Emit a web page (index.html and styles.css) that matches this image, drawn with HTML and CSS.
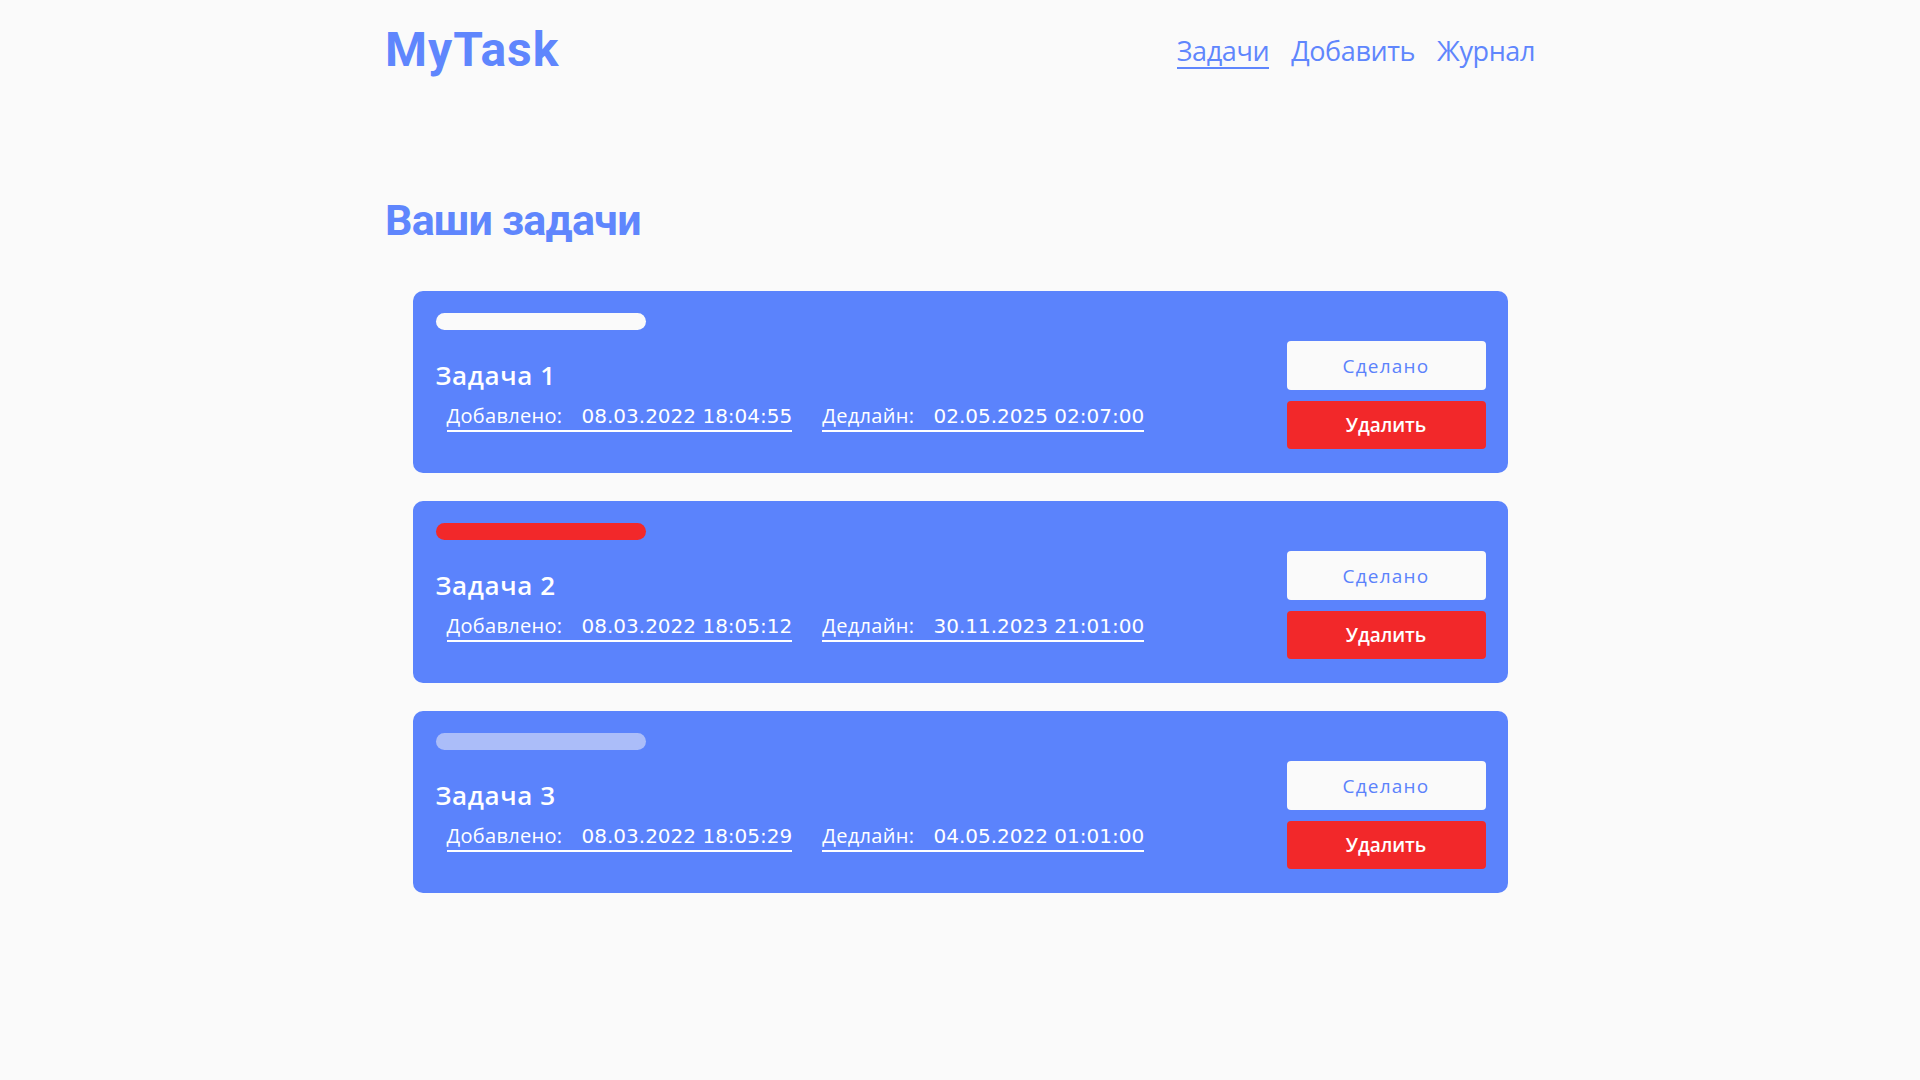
FILE: index.html
```html
<!DOCTYPE html>
<html lang="ru">
<head>
<meta charset="utf-8">
<title>MyTask</title>
<link rel="stylesheet" href="styles.css">
</head>
<body>
<div class="container">
  <header class="header">
    <div class="logo">MyTask</div>
    <nav class="nav">
      <a class="nav-link active" href="#">Задачи</a>
      <a class="nav-link" href="#">Добавить</a>
      <a class="nav-link" href="#">Журнал</a>
    </nav>
  </header>

  <h1 class="title">Ваши задачи</h1>

  <div class="tasks">
    <div class="card">
      <div class="bar bar-white"></div>
      <div class="card-row">
        <div class="card-info">
          <div class="task-name">Задача 1</div>
          <div class="dates">
            <span class="date"><span class="date-label">Добавлено:</span> <span class="date-value">08.03.2022 18:04:55</span></span>
            <span class="date"><span class="date-label">Дедлайн:</span> <span class="date-value">02.05.2025 02:07:00</span></span>
          </div>
        </div>
        <div class="buttons">
          <button class="btn btn-done">Сделано</button>
          <button class="btn btn-delete">Удалить</button>
        </div>
      </div>
    </div>

    <div class="card">
      <div class="bar bar-red"></div>
      <div class="card-row">
        <div class="card-info">
          <div class="task-name">Задача 2</div>
          <div class="dates">
            <span class="date"><span class="date-label">Добавлено:</span> <span class="date-value">08.03.2022 18:05:12</span></span>
            <span class="date"><span class="date-label">Дедлайн:</span> <span class="date-value">30.11.2023 21:01:00</span></span>
          </div>
        </div>
        <div class="buttons">
          <button class="btn btn-done">Сделано</button>
          <button class="btn btn-delete">Удалить</button>
        </div>
      </div>
    </div>

    <div class="card">
      <div class="bar bar-faded"></div>
      <div class="card-row">
        <div class="card-info">
          <div class="task-name">Задача 3</div>
          <div class="dates">
            <span class="date"><span class="date-label">Добавлено:</span> <span class="date-value">08.03.2022 18:05:29</span></span>
            <span class="date"><span class="date-label">Дедлайн:</span> <span class="date-value">04.05.2022 01:01:00</span></span>
          </div>
        </div>
        <div class="buttons">
          <button class="btn btn-done">Сделано</button>
          <button class="btn btn-delete">Удалить</button>
        </div>
      </div>
    </div>
  </div>
</div>
</body>
</html>
```
FILE: styles.css
```css
* { box-sizing: border-box; }

html, body {
  margin: 0;
  padding: 0;
  background: #fafafa;
  font-family: "Open Sans", "DejaVu Sans", sans-serif;
  color: #5b82fc;
}

.container {
  width: 1150px;
  margin: 0 auto;
}

.header {
  display: flex;
  justify-content: space-between;
  align-items: flex-start;
  padding-top: 26px;
}

.logo {
  font-family: "Roboto", sans-serif;
  font-size: 48px;
  font-weight: 700;
  line-height: 48px;
  letter-spacing: 1px;
  color: #5f86fd;
}

.nav {
  display: flex;
  gap: 22px;
  margin-top: 11px;
}

.nav-link {
  font-size: 27px;
  line-height: 27px;
  letter-spacing: -0.4px;
  color: #5f86fd;
  text-decoration: none;
  padding-bottom: 3px;
  border-bottom: 2px solid transparent;
}

.nav-link.active {
  border-bottom-color: #5f86fd;
}

.title {
  margin: 124px 0 0 0;
  font-family: "Roboto", sans-serif;
  font-size: 43px;
  font-weight: 700;
  line-height: 44px;
  letter-spacing: -0.8px;
  color: #5f86fd;
}

.tasks {
  margin-top: 49px;
  display: flex;
  flex-direction: column;
  gap: 28px;
  align-items: center;
}

.card {
  width: 1095px;
  background: #5b83fc;
  border-radius: 10px;
  padding: 22px 22px 24px 23px;
  color: #fff;
}

.bar {
  width: 210px;
  height: 17px;
  border-radius: 9px;
}

.bar-white { background: #fafafa; }
.bar-red { background: #f2282a; }
.bar-faded { background: #abbdf9; }

.card-row {
  margin-top: 11px;
  display: flex;
  justify-content: space-between;
  align-items: center;
}

.card-info {
  margin-top: 4px;
}

.task-name {
  font-size: 26px;
  font-weight: 600;
  line-height: 26px;
  letter-spacing: 0.6px;
}

.dates {
  margin-top: 18px;
  padding-left: 11px;
  display: flex;
  gap: 30px;
}

.date {
  font-size: 20px;
  line-height: 20px;
  border-bottom: 2px solid #fff;
  padding-bottom: 4px;
  white-space: nowrap;
}

.date-label {
  letter-spacing: 0.3px;
}

.date-value {
  font-family: "DejaVu Sans", sans-serif;
  margin-left: 14px;
}

.buttons {
  display: flex;
  flex-direction: column;
  gap: 11px;
}

.btn {
  width: 199px;
  height: 49px;
  border: none;
  border-radius: 4px;
  font-family: inherit;
  font-size: 19px;
}

.btn-done {
  background: #fafafa;
  color: #5b82fc;
  letter-spacing: 1.2px;
}

.btn-delete {
  height: 48px;
  background: #f2282a;
  color: #fff;
  font-weight: 600;
}
```
